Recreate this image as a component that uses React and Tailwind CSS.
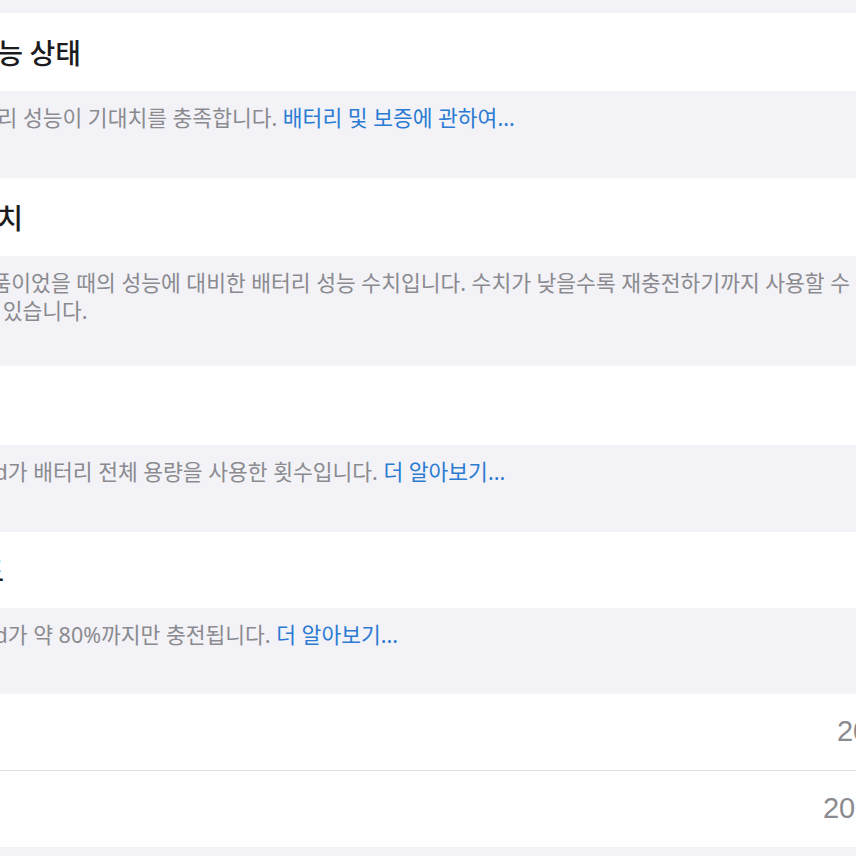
const sections = [
  {
    title: "배터리 성능 상태",
    cellH: "h-[78px]",
    foot: "h-[87px] pl-[118px]",
    lines: [["배터리 성능이 기대치를 충족합니다. ", "배터리 및 보증에 관하여..."]],
  },
  {
    title: "성능 최대치",
    cellH: "h-[78px]",
    foot: "h-[110px] pl-[112px]",
    lines: [
      ["신제품이었을 때의 성능에 대비한 배터리 성능 수치입니다. 수치가 낮을수록 재충전하기까지 사용할 수 있는 시간이 짧아", null],
      ["질 수 있습니다.", null],
    ],
  },
  {
    title: "사이클 수",
    cellH: "h-[79px]",
    foot: "h-[87px] pl-[124px]",
    lines: [["iPad가 배터리 전체 용량을 사용한 횟수입니다. ", "더 알아보기..."]],
  },
  {
    title: "80% 한도",
    cellH: "h-[76px]",
    foot: "h-[86px] pl-[124px]",
    lines: [["iPad가 약 80%까지만 충전됩니다. ", "더 알아보기..."]],
  },
]

function Footer({ lines, className }) {
  return (
    <div
      className={`${className} pt-[13px] font-['Noto_Sans','Noto_Sans_CJK_KR',sans-serif] text-[21.5px] leading-[28px] text-[#8a8a8f]`}
    >
      {lines.map(([text, link], i) => (
        <div key={i} className="whitespace-nowrap">
          {text}
          {link && <span className="text-[#2b7bd3]">{link}</span>}
        </div>
      ))}
    </div>
  )
}

function ValueRow({ label, value }) {
  return (
    <div className="flex h-[76px] items-center justify-between bg-white pl-[48px] pr-[61px]">
      <span className="whitespace-nowrap text-[28px] text-[#1c1c1e]">{label}</span>
      <span className="font-['Liberation_Sans','Noto_Sans_CJK_KR',sans-serif] text-[29px] text-[#8a8a8f]">
        {value}
      </span>
    </div>
  )
}

export default function App() {
  return (
    <div className="h-[856px] w-[856px] overflow-hidden bg-[#f2f2f7] font-['Noto_Sans_CJK_KR',sans-serif]">
      <div className="ml-[-160px] w-[1200px]">
        <div className="h-[13px]" />

        {sections.map((s) => (
          <div key={s.title}>
            <div className={`${s.cellH} flex items-center bg-white pl-[48px]`}>
              <span className="whitespace-nowrap text-[28px] font-medium text-[#1c1c1e]">
                {s.title}
              </span>
            </div>
            <Footer lines={s.lines} className={s.foot} />
          </div>
        ))}

        {/* dates */}
        <ValueRow label="제조일" value="2024년 5월" />
        <div className="bg-white pl-[48px]">
          <div className="h-px bg-[#dedee3]" />
        </div>
        <ValueRow label="첫 사용일" value="2024년 11월" />
      </div>
    </div>
  )
}
